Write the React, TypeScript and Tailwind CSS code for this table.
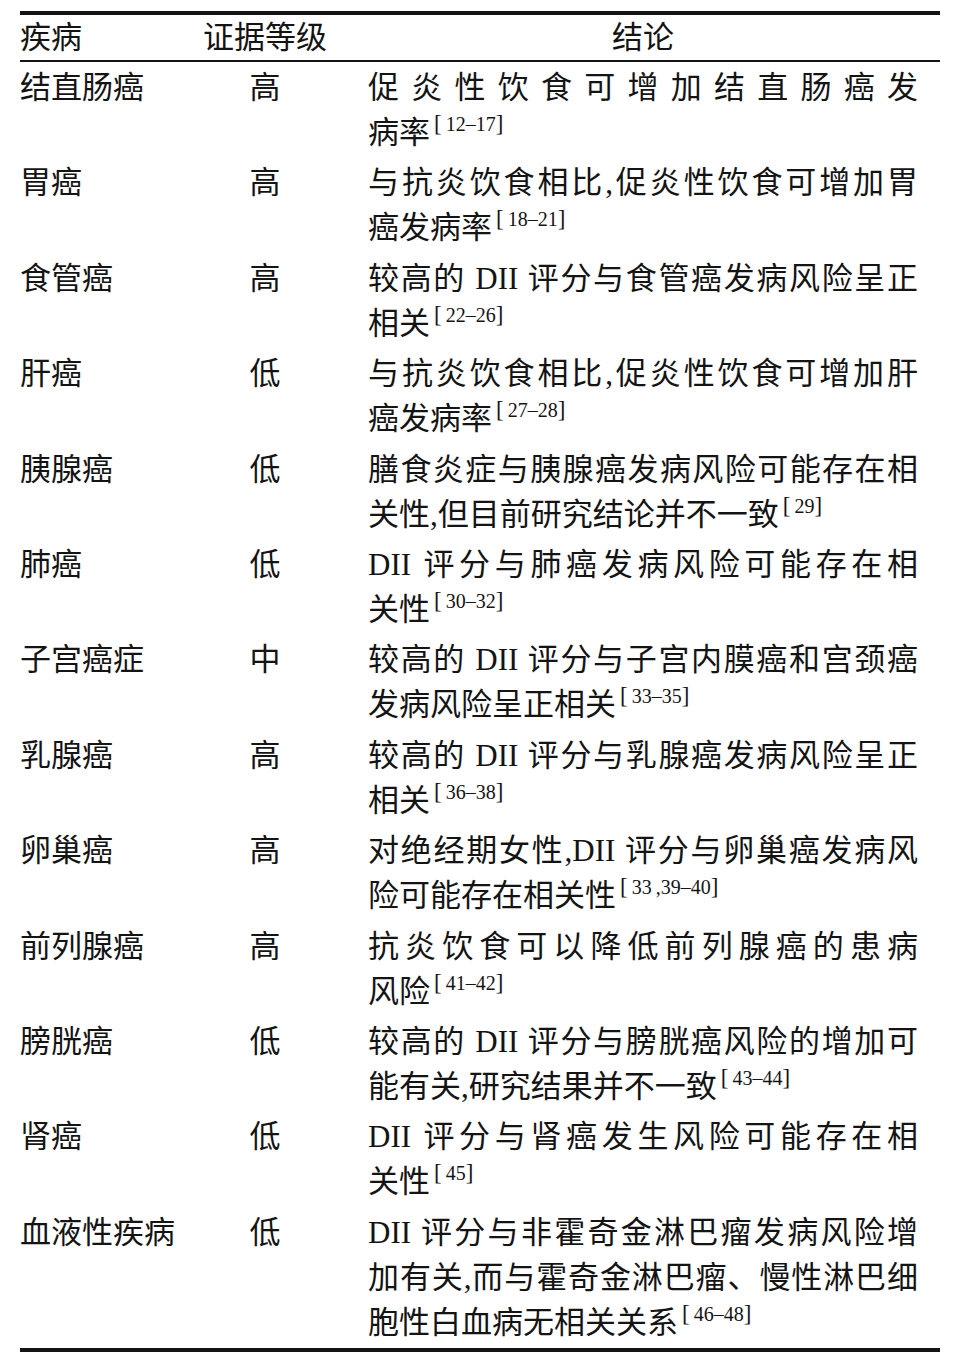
import React from "react";

type Row = {
  disease: string;
  level: string;
  lines: string[];
  refs: string;
};

const rows: Row[] = [
  { disease: "结直肠癌", level: "高", lines: ["促炎性饮食可增加结直肠癌发", "病率"], refs: "12–17" },
  { disease: "胃癌", level: "高", lines: ["与抗炎饮食相比,促炎性饮食可增加胃", "癌发病率"], refs: "18–21" },
  { disease: "食管癌", level: "高", lines: ["较高的 DII 评分与食管癌发病风险呈正", "相关"], refs: "22–26" },
  { disease: "肝癌", level: "低", lines: ["与抗炎饮食相比,促炎性饮食可增加肝", "癌发病率"], refs: "27–28" },
  { disease: "胰腺癌", level: "低", lines: ["膳食炎症与胰腺癌发病风险可能存在相", "关性,但目前研究结论并不一致"], refs: "29" },
  { disease: "肺癌", level: "低", lines: ["DII 评分与肺癌发病风险可能存在相", "关性"], refs: "30–32" },
  { disease: "子宫癌症", level: "中", lines: ["较高的 DII 评分与子宫内膜癌和宫颈癌", "发病风险呈正相关"], refs: "33–35" },
  { disease: "乳腺癌", level: "高", lines: ["较高的 DII 评分与乳腺癌发病风险呈正", "相关"], refs: "36–38" },
  { disease: "卵巢癌", level: "高", lines: ["对绝经期女性,DII 评分与卵巢癌发病风", "险可能存在相关性"], refs: "33\u2009,39–40" },
  { disease: "前列腺癌", level: "高", lines: ["抗炎饮食可以降低前列腺癌的患病", "风险"], refs: "41–42" },
  { disease: "膀胱癌", level: "低", lines: ["较高的 DII 评分与膀胱癌风险的增加可", "能有关,研究结果并不一致"], refs: "43–44" },
  { disease: "肾癌", level: "低", lines: ["DII 评分与肾癌发生风险可能存在相", "关性"], refs: "45" },
  {
    disease: "血液性疾病",
    level: "低",
    lines: ["DII 评分与非霍奇金淋巴瘤发病风险增", "加有关,而与霍奇金淋巴瘤、慢性淋巴细", "胞性白血病无相关关系"],
    refs: "46–48",
  },
];

const Conclusion = ({ lines, refs }: { lines: string[]; refs: string }) => (
  <div>
    {lines.map((line, i) => {
      const last = i === lines.length - 1;
      return (
        <div
          key={i}
          className={
            last
              ? "whitespace-nowrap h-[45px]"
              : "whitespace-nowrap h-[45px] text-justify [text-align-last:justify]"
          }
        >
          {line}
          {last && (
            <span className="relative -top-[12px] ml-[4px] text-[20px]">
              <span className="text-[23px]">[</span>
              {"\u2009"}
              {refs}
              <span className="text-[23px]">]</span>
            </span>
          )}
        </div>
      );
    })}
  </div>
);

export default function App() {
  return (
    <div className="min-h-[1360px] bg-white pt-[11px] text-[#141414] font-['Liberation_Serif','Noto_Sans_CJK_SC',serif] text-[31px] leading-[45px]">
      <div className="mx-[20px] w-[920px]">
        <div className="border-t-4 border-[#141414]" />
        <div className="grid grid-cols-[165px_160px_1fr] h-[47px] border-b-2 border-[#141414]">
          <div>疾病</div>
          <div className="text-center">证据等级</div>
          <div className="text-center pl-[23px] pr-[22px]">结论</div>
        </div>
        {rows.map((r) => (
          <div key={r.disease} className="grid grid-cols-[165px_160px_1fr] pt-[3px] pb-[2.4px]">
            <div>{r.disease}</div>
            <div className="text-center">{r.level}</div>
            <div className="pl-[23px] pr-[22px]">
              <Conclusion lines={r.lines} refs={r.refs} />
            </div>
          </div>
        ))}
        <div className="mt-[1px] border-t-4 border-[#141414]" />
      </div>
    </div>
  );
}
